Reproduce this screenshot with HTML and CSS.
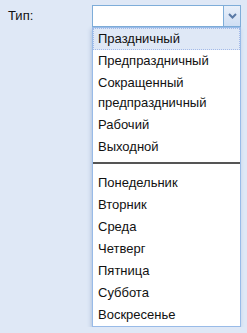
FILE: index.html
```html
<!DOCTYPE html>
<html lang="ru">
<head>
  <meta charset="UTF-8" />
  <meta name="viewport" content="width=device-width, initial-scale=1.0"/>
  <title>Тип</title>
  <link rel="stylesheet" href="styles.css">
</head>
<body>
  <div class="form-row">
    <label for="dayType">Тип:</label>
    <div class="combo">
      <div class="combo-field">
        <input type="text" id="dayType" />
        <span class="trigger">
          <svg width="9" height="6" viewBox="0 0 9 6">
            <path d="M1 1 L4.5 4.5 L8 1" fill="none" stroke="#5a7aa6" stroke-width="2"/>
          </svg>
        </span>
      </div>
      <ul class="combo-list">
        <li class="selected">Праздничный</li>
        <li>Предпраздничный</li>
        <li>Сокращенный предпраздничный</li>
        <li>Рабочий</li>
        <li>Выходной</li>
        <li class="separator"></li>
        <li>Понедельник</li>
        <li>Вторник</li>
        <li>Среда</li>
        <li>Четверг</li>
        <li>Пятница</li>
        <li>Суббота</li>
        <li>Воскресенье</li>
      </ul>
    </div>
  </div>
</body>
</html>
```

FILE: styles.css
```css
body {
  margin: 0;
  background: #dfe8f6;
  font-family: "Liberation Sans", Arial, sans-serif;
  font-size: 13px;
  color: #111;
}
.form-row {
  display: flex;
  align-items: flex-start;
  padding: 5px 0 0 8px;
}
label {
  width: 84px;
  line-height: 22px;
}
.combo {
  width: 149px;
}
.combo-field {
  display: flex;
  height: 22px;
  box-sizing: border-box;
  border: 1px solid #7eadd9;
  background: #fff;
}
.combo-field input {
  flex: 1;
  min-width: 0;
  border: none;
  padding: 0 4px;
  font: inherit;
  outline: none;
}
.trigger {
  width: 16px;
  border-left: 1px solid #7eadd9;
  background: linear-gradient(#e9f0fa, #cfdef3);
  display: flex;
  align-items: center;
  justify-content: center;
}
.combo-list {
  margin: 0;
  padding: 0;
  list-style: none;
  background: #fff;
  border: 1px solid #99bbe8;
  box-shadow: -1px 2px 4px rgba(120, 150, 190, 0.45);
}
.combo-list li {
  padding: 0 4px;
  line-height: 20px;
  border: 1px solid transparent;
}
.combo-list li.selected {
  background: #dfe8f6;
  border: 1px dotted #a3bae9;
}
.combo-list li.separator {
  height: 2px;
  padding: 0;
  border: none;
  margin: 4px 0 8px;
  background: #555;
}
```
